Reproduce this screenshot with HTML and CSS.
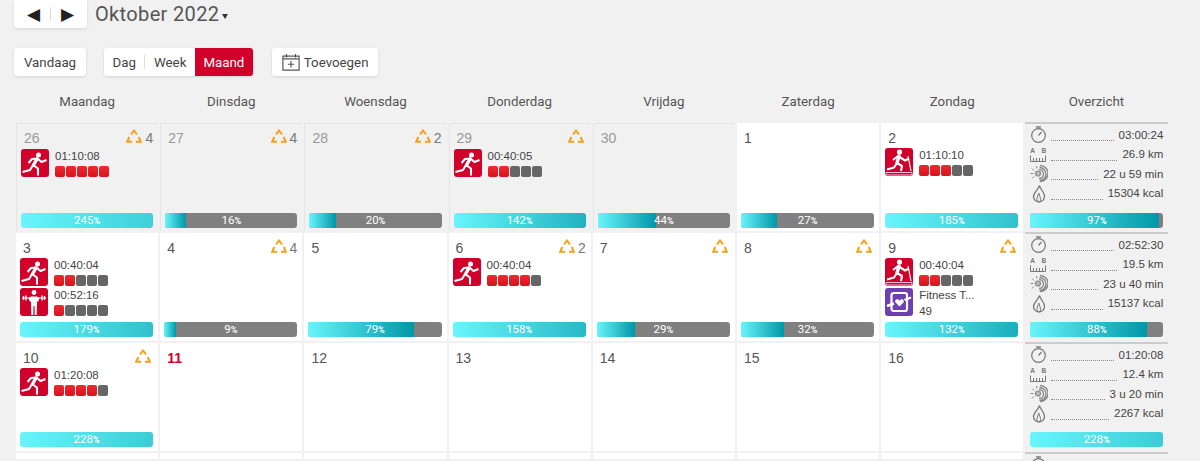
FILE: index.html
```html
<!DOCTYPE html>
<html lang="nl">
<head>
    <meta charset="UTF-8">
    <meta name="viewport" content="width=device-width, initial-scale=1.0">
    <title>Kalender</title>
    <link rel="stylesheet" href="styles.css">
</head>
<body>
    <svg class="defs" width="0" height="0">
        <symbol id="run" viewBox="0 0 28 28">
            <circle cx="17.5" cy="6" r="2.5" fill="#fff"/>
            <path d="M25.5 11 20.5 13 16.5 9.5 11 10 7.5 14M12 16 17 19.5 17 26.5M12 16 9 21 1.5 23" fill="none" stroke="#fff" stroke-width="2.1" stroke-linejoin="round"/>
            <path d="M16 10 12.5 16" stroke="#fff" stroke-width="3.4" stroke-linecap="round"/>
        </symbol>
        <symbol id="tread" viewBox="0 0 28 28">
            <circle cx="14.5" cy="4" r="2.6" fill="#fff"/>
            <path d="M8 12 13 8 20 12.5 24 10.5M12 15 17 18 16 23M12 15 9 19.5 2 21.5" fill="none" stroke="#fff" stroke-width="2.1" stroke-linejoin="round"/>
            <path d="M14 8 12 15" stroke="#fff" stroke-width="3.4" stroke-linecap="round"/>
            <path d="M23 8 26 23" fill="none" stroke="#fff" stroke-width="1.2"/>
            <path d="M1 24.5H27V27H1Z" fill="none" stroke="#fbd" stroke-width="1"/>
        </symbol>
        <symbol id="lift" viewBox="0 0 28 28">
            <circle cx="14" cy="4.5" r="2.4" fill="#fff"/>
            <path d="M2 10H26" stroke="#fff" stroke-width="1"/>
            <path d="M3.5 8V12M6 7.5V12.5M22 7.5V12.5M24.5 8V12" stroke="#fff" stroke-width="1.4"/>
            <path d="M8.5 10 9.5 13 11 14V18H17V14L18.5 13 19.5 10 17 8.5H11Z" fill="#fff"/>
            <path d="M11 17.5H13.5L13.3 27H11.3ZM14.5 17.5H17L16.7 27H14.7Z" fill="#fff"/>
        </symbol>
        <symbol id="fit" viewBox="0 0 28 28">
            <path d="M6.5 7C6.5 5.5 8 5 9 5H20C21.5 5 22 6 22 7V21C22 22.5 21 23 20 23H9C7.5 23 6.5 22 6.5 21Z" fill="none" stroke="#fff" stroke-width="2.2"/>
            <path d="M2 18 9 15.5M19.5 12 26 9.5" stroke="#fff" stroke-width="2.4"/>
            <path d="M14.5 18.5 10.5 14.5C9 12 12.3 10 14.5 12.5 16.7 10 20 12 18.5 14.5Z" fill="#fff"/>
        </symbol>
        <symbol id="tri" viewBox="0 0 16 14">
            <path d="M5 5.5 8 1.5 11 5.5M3.3 8 1.2 12.8H6M10 12.8H14.8L12.7 8" fill="none" stroke="#f9a01b" stroke-width="2"/>
        </symbol>
        <symbol id="time" viewBox="0 0 18 19">
            <circle cx="8.5" cy="10.5" r="6.8" fill="none" stroke="#777" stroke-width="1.2"/>
            <path d="M6 1.8H11M8.5 2V3.7M8.5 10.5 11.5 7" fill="none" stroke="#777" stroke-width="1.2"/>
        </symbol>
        <symbol id="sun" viewBox="0 0 18 19">
            <path d="M9 5.5A4.5 4.5 0 1 1 9 14.5M9.5 3.5A6.5 6.5 0 1 1 9.5 16.5M10 1.5A8 8 0 1 1 10 17.5" fill="none" stroke="#888" stroke-width="1.4"/>
            <circle cx="8" cy="9.5" r="2.5" fill="#bbb" stroke="#888" stroke-width="1.2"/>
            <path d="M0.5 9.5H3.5M2 4.5 4 6.5M2 14.5 4 12.5M6.5 2 7 4.5" stroke="#888"/>
        </symbol>
        <symbol id="flame" viewBox="0 0 18 19">
            <path d="M9.5 1.5C10 5 14.5 8 14.5 12.5A5.5 5.5 0 0 1 3.5 12.5C3.5 9 8 6 9.5 1.5Z" fill="none" stroke="#777" stroke-width="1.3"/>
            <path d="M8.8 9C9.3 12 11.5 14 10 18M8.8 9C8 12 6 14 7.5 18" fill="none" stroke="#777"/>
        </symbol>
        <symbol id="ruler" viewBox="0 0 16 7">
            <path d="M0.5 0.5V6.5H15.5V0.5M3.5 3V6M6.5 3V6M9.5 3V6M12.5 3V6" fill="none" stroke="#777"/>
        </symbol>
    </svg>

    <div class="nav-row">
        <div class="btn-card arrows">
            <span class="arrow">◀</span>
            <span class="sep"></span>
            <span class="arrow">▶</span>
        </div>
        <h1 class="month">Oktober 2022<span class="caret"></span></h1>
    </div>

    <div class="tool-row">
        <button class="btn-card today">Vandaag</button>
        <div class="btn-card views">
            <span class="view">Dag</span>
            <span class="sep"></span>
            <span class="view">Week</span>
            <span class="view active">Maand</span>
        </div>
        <button class="btn-card add">
            <svg class="add-icon" viewBox="0 0 20 20" width="18" height="18">
                <path d="M1 3.5H19V19H1ZM1 6.5H19M5 1V5M15 1V5M10 9V16M6.5 12.5H13.5" fill="none" stroke="#555" stroke-width="1.3"/>
            </svg>
            Toevoegen
        </button>
    </div>

    <div class="calendar">
        <div class="day-name">Maandag</div>
        <div class="day-name">Dinsdag</div>
        <div class="day-name">Woensdag</div>
        <div class="day-name">Donderdag</div>
        <div class="day-name">Vrijdag</div>
        <div class="day-name">Zaterdag</div>
        <div class="day-name">Zondag</div>
        <div class="day-name">Overzicht</div>

        <!-- week 1 -->
        <div class="cell other">
            <div class="cell-head"><span class="num">26</span><span class="goal"><svg class="tri"><use href="#tri"/></svg>4</span></div>
            <div class="act">
                <svg class="sport"><use href="#run"/></svg>
                <div class="act-info"><div class="act-time">01:10:08</div><div class="load"><i class="on"></i><i class="on"></i><i class="on"></i><i class="on"></i><i class="on"></i></div></div>
            </div>
            <div class="bar"><div class="fill" style="width:245%"></div><span class="bar-text">245<small>%</small></span></div>
        </div>
        <div class="cell other">
            <div class="cell-head"><span class="num">27</span><span class="goal"><svg class="tri"><use href="#tri"/></svg>4</span></div>
            <div class="bar"><div class="fill" style="width:16%"></div><span class="bar-text">16<small>%</small></span></div>
        </div>
        <div class="cell other">
            <div class="cell-head"><span class="num">28</span><span class="goal"><svg class="tri"><use href="#tri"/></svg>2</span></div>
            <div class="bar"><div class="fill" style="width:20%"></div><span class="bar-text">20<small>%</small></span></div>
        </div>
        <div class="cell other">
            <div class="cell-head"><span class="num">29</span><span class="goal solo"><svg class="tri"><use href="#tri"/></svg></span></div>
            <div class="act">
                <svg class="sport"><use href="#run"/></svg>
                <div class="act-info"><div class="act-time">00:40:05</div><div class="load"><i class="on"></i><i class="on"></i><i></i><i></i><i></i></div></div>
            </div>
            <div class="bar"><div class="fill" style="width:142%"></div><span class="bar-text">142<small>%</small></span></div>
        </div>
        <div class="cell other">
            <div class="cell-head"><span class="num">30</span></div>
            <div class="bar"><div class="fill" style="width:44%"></div><span class="bar-text">44<small>%</small></span></div>
        </div>
        <div class="cell first">
            <div class="cell-head"><span class="num">1</span></div>
            <div class="bar"><div class="fill" style="width:27%"></div><span class="bar-text">27<small>%</small></span></div>
        </div>
        <div class="cell first">
            <div class="cell-head"><span class="num">2</span></div>
            <div class="act">
                <svg class="sport"><use href="#tread"/></svg>
                <div class="act-info"><div class="act-time">01:10:10</div><div class="load"><i class="on"></i><i class="on"></i><i class="on"></i><i></i><i></i></div></div>
            </div>
            <div class="bar"><div class="fill" style="width:185%"></div><span class="bar-text">185<small>%</small></span></div>
        </div>
        <div class="summary first">
            <div class="stat"><svg class="stat-icon"><use href="#time"/></svg><span class="dots"></span><span>03:00:24</span></div>
            <div class="stat"><span class="dist-icon"><span class="ab"><span>A</span><span>B</span></span><svg class="ruler"><use href="#ruler"/></svg></span><span class="dots"></span><span>26.9 km</span></div>
            <div class="stat"><svg class="stat-icon"><use href="#sun"/></svg><span class="dots"></span><span>22 u 59 min</span></div>
            <div class="stat"><svg class="stat-icon"><use href="#flame"/></svg><span class="dots"></span><span>15304 kcal</span></div>
            <div class="bar"><div class="fill" style="width:97%"></div><span class="bar-text">97<small>%</small></span></div>
        </div>

        <!-- week 2 -->
        <div class="cell">
            <div class="cell-head"><span class="num">3</span></div>
            <div class="act">
                <svg class="sport"><use href="#run"/></svg>
                <div class="act-info"><div class="act-time">00:40:04</div><div class="load"><i class="on"></i><i class="on"></i><i></i><i></i><i></i></div></div>
            </div>
            <div class="act">
                <svg class="sport"><use href="#lift"/></svg>
                <div class="act-info"><div class="act-time">00:52:16</div><div class="load"><i class="on"></i><i></i><i></i><i></i><i></i></div></div>
            </div>
            <div class="bar"><div class="fill" style="width:179%"></div><span class="bar-text">179<small>%</small></span></div>
        </div>
        <div class="cell">
            <div class="cell-head"><span class="num">4</span><span class="goal"><svg class="tri"><use href="#tri"/></svg>4</span></div>
            <div class="bar"><div class="fill" style="width:9%"></div><span class="bar-text">9<small>%</small></span></div>
        </div>
        <div class="cell">
            <div class="cell-head"><span class="num">5</span></div>
            <div class="bar"><div class="fill" style="width:79%"></div><span class="bar-text">79<small>%</small></span></div>
        </div>
        <div class="cell">
            <div class="cell-head"><span class="num">6</span><span class="goal"><svg class="tri"><use href="#tri"/></svg>2</span></div>
            <div class="act">
                <svg class="sport"><use href="#run"/></svg>
                <div class="act-info"><div class="act-time">00:40:04</div><div class="load"><i class="on"></i><i class="on"></i><i class="on"></i><i class="on"></i><i></i></div></div>
            </div>
            <div class="bar"><div class="fill" style="width:158%"></div><span class="bar-text">158<small>%</small></span></div>
        </div>
        <div class="cell">
            <div class="cell-head"><span class="num">7</span><span class="goal solo"><svg class="tri"><use href="#tri"/></svg></span></div>
            <div class="bar"><div class="fill" style="width:29%"></div><span class="bar-text">29<small>%</small></span></div>
        </div>
        <div class="cell">
            <div class="cell-head"><span class="num">8</span><span class="goal solo"><svg class="tri"><use href="#tri"/></svg></span></div>
            <div class="bar"><div class="fill" style="width:32%"></div><span class="bar-text">32<small>%</small></span></div>
        </div>
        <div class="cell">
            <div class="cell-head"><span class="num">9</span><span class="goal solo"><svg class="tri"><use href="#tri"/></svg></span></div>
            <div class="act">
                <svg class="sport"><use href="#tread"/></svg>
                <div class="act-info"><div class="act-time">00:40:04</div><div class="load"><i class="on"></i><i class="on"></i><i></i><i></i><i></i></div></div>
            </div>
            <div class="act">
                <svg class="sport purple"><use href="#fit"/></svg>
                <div class="act-info"><div class="act-time">Fitness T...</div><div class="act-time score">49</div></div>
            </div>
            <div class="bar"><div class="fill" style="width:132%"></div><span class="bar-text">132<small>%</small></span></div>
        </div>
        <div class="summary">
            <div class="stat"><svg class="stat-icon"><use href="#time"/></svg><span class="dots"></span><span>02:52:30</span></div>
            <div class="stat"><span class="dist-icon"><span class="ab"><span>A</span><span>B</span></span><svg class="ruler"><use href="#ruler"/></svg></span><span class="dots"></span><span>19.5 km</span></div>
            <div class="stat"><svg class="stat-icon"><use href="#sun"/></svg><span class="dots"></span><span>23 u 40 min</span></div>
            <div class="stat"><svg class="stat-icon"><use href="#flame"/></svg><span class="dots"></span><span>15137 kcal</span></div>
            <div class="bar"><div class="fill" style="width:88%"></div><span class="bar-text">88<small>%</small></span></div>
        </div>

        <!-- week 3 -->
        <div class="cell">
            <div class="cell-head"><span class="num">10</span><span class="goal solo"><svg class="tri"><use href="#tri"/></svg></span></div>
            <div class="act">
                <svg class="sport"><use href="#run"/></svg>
                <div class="act-info"><div class="act-time">01:20:08</div><div class="load"><i class="on"></i><i class="on"></i><i class="on"></i><i class="on"></i><i></i></div></div>
            </div>
            <div class="bar"><div class="fill" style="width:228%"></div><span class="bar-text">228<small>%</small></span></div>
        </div>
        <div class="cell"><div class="cell-head"><span class="num today-num">11</span></div></div>
        <div class="cell"><div class="cell-head"><span class="num">12</span></div></div>
        <div class="cell"><div class="cell-head"><span class="num">13</span></div></div>
        <div class="cell"><div class="cell-head"><span class="num">14</span></div></div>
        <div class="cell"><div class="cell-head"><span class="num">15</span></div></div>
        <div class="cell"><div class="cell-head"><span class="num">16</span></div></div>
        <div class="summary">
            <div class="stat"><svg class="stat-icon"><use href="#time"/></svg><span class="dots"></span><span>01:20:08</span></div>
            <div class="stat"><span class="dist-icon"><span class="ab"><span>A</span><span>B</span></span><svg class="ruler"><use href="#ruler"/></svg></span><span class="dots"></span><span>12.4 km</span></div>
            <div class="stat"><svg class="stat-icon"><use href="#sun"/></svg><span class="dots"></span><span>3 u 20 min</span></div>
            <div class="stat"><svg class="stat-icon"><use href="#flame"/></svg><span class="dots"></span><span>2267 kcal</span></div>
            <div class="bar"><div class="fill" style="width:228%"></div><span class="bar-text">228<small>%</small></span></div>
        </div>

        <!-- week 4, only its top edge is in view -->
        <div class="cell"></div>
        <div class="cell"></div>
        <div class="cell"></div>
        <div class="cell"></div>
        <div class="cell"></div>
        <div class="cell"></div>
        <div class="cell"></div>
        <div class="summary">
            <div class="stat"><svg class="stat-icon"><use href="#time"/></svg></div>
        </div>
    </div>
</body>
</html>
```

FILE: styles.css
```css
html, body {
    height: 461px;
    overflow: hidden;
}

body {
    margin: 0;
    background-color: #f1f1f1;
    color: #444;
    font-family: Roboto, Arial, sans-serif;
    font-size: 13px;
}

.defs {
    position: absolute;
}

.btn-card {
    display: inline-flex;
    align-items: center;
    height: 28px;
    background-color: #fff;
    border: none;
    border-radius: 3px;
    box-shadow: 0 1px 3px rgba(0, 0, 0, 0.12);
    color: #444;
    font-family: inherit;
    font-size: 13.3px;
    padding: 0;
}

.nav-row {
    display: flex;
    align-items: center;
    height: 28px;
    padding-left: 14px;
}

.arrows {
    width: 73px;
    justify-content: center;
    gap: 10px;
    border-radius: 0 0 3px 3px;
}

.arrow {
    color: #222;
    font-size: 17px;
    line-height: 1;
}

.sep {
    width: 1px;
    height: 14px;
    background-color: #ddd;
}

.month {
    margin: 0 0 0 8px;
    color: #555;
    font-size: 20px;
    font-weight: normal;
    letter-spacing: 0.35px;
}

.caret {
    display: inline-block;
    margin-left: 3px;
    vertical-align: 2px;
    border-top: 5px solid #333;
    border-left: 3.5px solid transparent;
    border-right: 3.5px solid transparent;
}

.tool-row {
    display: flex;
    margin-top: 20px;
    padding-left: 14px;
}

.today {
    width: 72px;
    justify-content: center;
}

.views {
    margin-left: 18px;
    overflow: hidden;
}

.view {
    padding: 0 8.5px;
}

.view.active {
    display: flex;
    align-items: center;
    height: 100%;
    background-color: #d0002a;
    color: #fff;
}

.add {
    margin-left: 19px;
    padding: 0 10px;
    gap: 4px;
}

.calendar {
    display: grid;
    grid-template-columns: repeat(8, 144.2px);
    grid-template-rows: 47px 110px 110px 110px 8px;
    margin-left: 16px;
}

.day-name {
    display: flex;
    align-items: center;
    justify-content: center;
    padding: 3px 2px 0 0;
    color: #555;
    font-size: 13.3px;
}

.cell {
    display: flex;
    flex-direction: column;
    box-sizing: border-box;
    min-height: 0;
    margin-right: 2px;
    margin-bottom: 2px;
    padding: 0 5px 4px 4px;
    background-color: #fff;
}

.cell.first {
    padding-bottom: 3px;
}

.cell.other {
    padding-bottom: 3px;
    background-color: #f1f1f1;
    border-top: 1px solid #e4e4e4;
    border-left: 1px solid #e4e4e4;
}

.cell-head {
    display: flex;
    justify-content: space-between;
    box-sizing: border-box;
    height: 25px;
    padding: 7px 0 0 3px;
    font-family: "Liberation Sans", Arial, sans-serif;
    font-size: 14px;
    line-height: 16px;
}

.other .cell-head {
    padding-top: 6px;
}

.num {
    color: #555;
}

.other .num {
    color: #999;
}

.today-num {
    color: #d0002a;
    font-weight: bold;
}

.goal {
    display: flex;
    gap: 3px;
    color: #777;
}

.goal.solo {
    padding-right: 2px;
}

.tri {
    width: 16px;
    height: 14px;
    margin-top: -1px;
}

.act {
    display: flex;
    height: 30px;
    gap: 6px;
}

.sport {
    width: 28px;
    height: 28px;
    flex: none;
    background-color: #d0002a;
    border-radius: 3px;
}

.sport.purple {
    background-color: #6f3fb0;
}

.act-time {
    height: 17px;
    font-family: "Liberation Sans", Arial, sans-serif;
    font-size: 11.5px;
    line-height: 15px;
    color: #444;
}

.act-time.score {
    margin-top: -1px;
}

.load {
    display: flex;
    gap: 1px;
}

.load i {
    width: 10px;
    height: 10.5px;
    border-radius: 2px;
    background-color: #666;
}

.load i.on {
    background: linear-gradient(#ee2a30, #d8121e);
}

.bar {
    position: relative;
    flex: none;
    height: 15px;
    margin-top: auto;
    overflow: hidden;
    border-radius: 3px;
    background-color: #808080;
}

.fill {
    height: 100%;
    background: linear-gradient(to right, #68f5fc, #0097a7);
}

.bar-text {
    position: absolute;
    top: 0;
    left: 0;
    right: 0;
    color: #fff;
    font-size: 11.5px;
    line-height: 15px;
    text-align: center;
}

.bar-text small {
    font-size: 9px;
    font-weight: bold;
}

.summary {
    display: flex;
    flex-direction: column;
    box-sizing: border-box;
    width: 143px;
    min-height: 0;
    margin-top: -1px;
    padding: 1px 5px 6px;
    overflow: hidden;
    border-top: 2px solid #ccc;
    color: #444;
}

.summary.first {
    padding-bottom: 5px;
}

.stat {
    display: flex;
    flex: none;
    align-items: center;
    height: 19.5px;
    font-family: "Liberation Sans", Arial, sans-serif;
    font-size: 11.5px;
}

.stat-icon {
    width: 18px;
    height: 19px;
    flex: none;
}

.dist-icon {
    display: flex;
    flex: none;
    flex-direction: column;
    width: 16px;
    margin-right: 2px;
}

.ab {
    display: flex;
    justify-content: space-between;
    color: #777;
    font-size: 6.5px;
    font-weight: bold;
    line-height: 9px;
}

.ruler {
    width: 16px;
    height: 7px;
}

.dots {
    flex: 1;
    height: 12px;
    margin: 0 5px 0 3px;
    border-bottom: 1px dotted #888;
}
```
